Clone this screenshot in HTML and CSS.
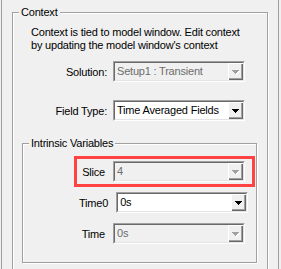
FILE: index.html
```html
<!DOCTYPE html>
<html>
<head>
    <title>Context</title>
    <link rel="stylesheet" href="styles.css">
</head>
<body>
    <div class="panel">
        <fieldset class="group context">
            <legend>Context</legend>
            <p class="note">Context is tied to model window. Edit context<br>by updating the model window's context</p>

            <div class="row first">
                <label>Solution:</label>
                <div class="combo disabled">
                    <span class="value">Setup1 : Transient</span>
                    <span class="drop"><svg width="7" height="4" viewBox="0 0 7 4"><path d="M0 0h7v1h-1v1h-1v1h-1v1h-1v-1h-1v-1h-1v-1h-1z"/></svg></span>
                </div>
            </div>

            <div class="row second">
                <label>Field Type:</label>
                <div class="combo">
                    <span class="value">Time Averaged Fields</span>
                    <span class="drop"><svg width="7" height="4" viewBox="0 0 7 4"><path d="M0 0h7v1h-1v1h-1v1h-1v1h-1v-1h-1v-1h-1v-1h-1z"/></svg></span>
                </div>
            </div>

            <fieldset class="group intrinsic">
                <legend>Intrinsic Variables</legend>

                <div class="row highlight">
                    <label>Slice</label>
                    <div class="combo disabled">
                        <span class="value">4</span>
                        <span class="drop"><svg width="7" height="4" viewBox="0 0 7 4"><path d="M0 0h7v1h-1v1h-1v1h-1v1h-1v-1h-1v-1h-1v-1h-1z"/></svg></span>
                    </div>
                </div>

                <div class="row">
                    <label>Time0</label>
                    <div class="combo">
                        <span class="value">0s</span>
                        <span class="drop"><svg width="7" height="4" viewBox="0 0 7 4"><path d="M0 0h7v1h-1v1h-1v1h-1v1h-1v-1h-1v-1h-1v-1h-1z"/></svg></span>
                    </div>
                </div>

                <div class="row">
                    <label>Time</label>
                    <div class="combo disabled">
                        <span class="value">0s</span>
                        <span class="drop"><svg width="7" height="4" viewBox="0 0 7 4"><path d="M0 0h7v1h-1v1h-1v1h-1v1h-1v-1h-1v-1h-1v-1h-1z"/></svg></span>
                    </div>
                </div>
            </fieldset>
        </fieldset>
    </div>
</body>
</html>
```
FILE: styles.css
```css
html, body {
    margin: 0;
    background-color: #f0f0f0;
}
body {
    font-family: "Liberation Sans", Arial, sans-serif;
    font-size: 11px;
    letter-spacing: -0.2px;
    color: #000;
}
.panel {
    margin-left: 1px;
    width: 276px;
    height: 263px;
    padding-top: 6px;
    overflow: hidden;
    border-left: 1px solid #a0a0a0;
    border-right: 1px solid #a0a0a0;
}
.group {
    margin: 0;
    min-inline-size: 0;
    border: 1px solid #a0a0a0;
    box-shadow: 1px 1px 0 #fff, inset 1px 1px 0 #fff;
}
.group legend {
    padding: 0 2px;
    line-height: 13px;
    background-color: #f0f0f0;
}
.context {
    margin: 0 10px;
    padding: 7px 10px 20px 9px;
}
.context > legend {
    margin-left: -3px;
}
.note {
    margin: 0 0 0 9px;
    line-height: 13px;
}
.row {
    display: flex;
    align-items: center;
    height: 21px;
}
.row label {
    flex: 0 0 85px;
    text-align: right;
}
.row .combo {
    margin-left: 6px;
}
.row.first {
    margin-top: 9px;
}
.row.second {
    margin-top: 18px;
}
.intrinsic {
    margin: 16px 0 0 0;
    padding: 11px 6px 18px 8px;
}
.intrinsic > legend {
    margin-left: -2px;
}
.intrinsic .row {
    margin-left: 48px;
    margin-bottom: 10px;
}
.intrinsic .row:last-child {
    margin-bottom: 0;
}
.intrinsic .row label {
    flex: 0 0 26px;
}
.intrinsic .row .combo {
    margin-left: 8px;
}
.highlight {
    outline: 3px solid #ff4343;
    outline-offset: 2px;
}
.combo {
    display: flex;
    box-sizing: border-box;
    width: 132px;
    height: 21px;
    border: 1px solid;
    border-color: #a0a0a0 #fff #fff #a0a0a0;
    background-color: #fff;
}
.combo .value {
    flex: 1;
    padding-left: 2px;
    line-height: 17px;
    border: 1px solid;
    border-right: 0;
    border-color: #696969 #e3e3e3 #e3e3e3 #696969;
    white-space: nowrap;
    overflow: hidden;
}
.combo .drop {
    display: flex;
    align-items: center;
    justify-content: center;
    box-sizing: border-box;
    width: 16px;
    height: 19px;
    border-top: 1px solid #696969;
    border-bottom: 1px solid #e3e3e3;
    border-right: 1px solid #e3e3e3;
    background-color: #f0f0f0;
    box-shadow: inset 1px 1px 0 #fff, inset -1px -1px 0 #696969, inset -2px -2px 0 #a0a0a0;
}
.combo .drop svg {
    fill: #000;
    margin: 1px 0 0 0;
}
.combo.disabled .value {
    background-color: #f0f0f0;
    color: #6d6d6d;
}
.combo.disabled .drop svg {
    fill: #a0a0a0;
    filter: drop-shadow(1px 1px 0 #fff);
}
```
